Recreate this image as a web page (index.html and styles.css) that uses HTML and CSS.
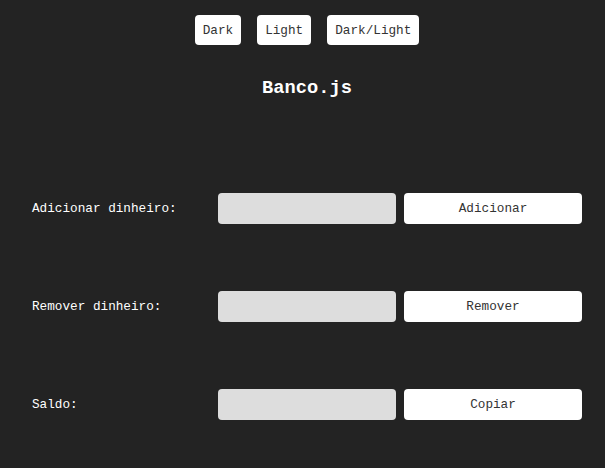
FILE: index.html
```html
<!DOCTYPE html>
<html lang="pt">
<head>
<meta charset="utf-8">
<link rel="stylesheet" href="styles.css">
</head>
<body>
<div class="page">
  <nav class="themes">
    <button class="theme-btn">Dark</button>
    <button class="theme-btn">Light</button>
    <button class="theme-btn">Dark/Light</button>
  </nav>
  <h1 class="title">Banco.js</h1>
  <main class="rows">
    <div class="row">
      <label class="label">Adicionar dinheiro:</label>
      <input class="field" type="text">
      <button class="action">Adicionar</button>
    </div>
    <div class="row">
      <label class="label">Remover dinheiro:</label>
      <input class="field" type="text">
      <button class="action">Remover</button>
    </div>
    <div class="row">
      <label class="label">Saldo:</label>
      <input class="field" type="text" disabled>
      <button class="action">Copiar</button>
    </div>
  </main>
</div>
</body>
</html>
```
FILE: styles.css
```css
html, body {
  margin: 0;
  padding: 0;
  background: #232323;
}
body {
  font-family: "Liberation Mono", "Courier New", monospace;
  font-size: 12.7px;
  color: #fff;
  width: 605px;
  height: 468px;
  overflow: hidden;
}
.page {
  padding-left: 9px;
}
.themes {
  display: flex;
  justify-content: center;
  gap: 16px;
  padding-top: 15px;
}
.theme-btn {
  font-family: inherit;
  font-size: 12.7px;
  height: 30px;
  padding: 0 8px;
  border: none;
  border-radius: 4px;
  background: #fff;
  color: #333;
}
.title {
  font-size: 18.72px;
  font-weight: bold;
  text-align: center;
  margin: 33px 0 0;
  line-height: 20px;
}
.rows {
  display: flex;
  flex-direction: column;
  gap: 67px;
  margin-top: 95px;
  padding-left: 23px;
}
.row {
  display: grid;
  grid-template-columns: 186px 178px 178px;
  column-gap: 8px;
  align-items: center;
  height: 31px;
}
.label {
  color: #fff;
}
.row .field {
  margin-left: -8px;
}
.field {
  height: 31px;
  box-sizing: border-box;
  border: none;
  border-radius: 4px;
  background: #dddddd;
  width: 178px;
}
.action {
  font-family: inherit;
  font-size: 12.7px;
  height: 31px;
  border: none;
  border-radius: 4px;
  background: #fff;
  color: #333;
  margin-left: -8px;
  width: 178px;
}
```
